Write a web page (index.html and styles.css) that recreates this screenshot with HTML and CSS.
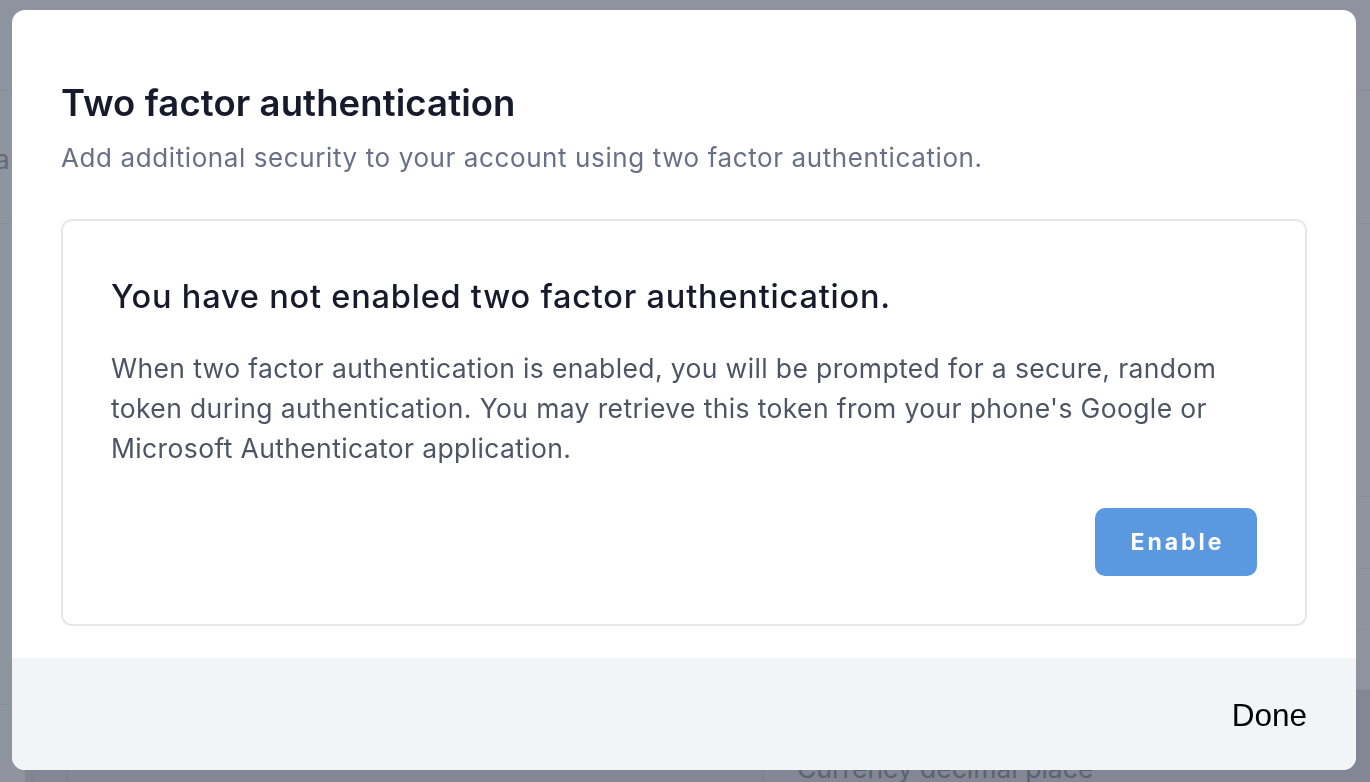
FILE: index.html
```html
<!DOCTYPE html>
<html lang="en">
<head>
<meta charset="utf-8">
<title>Two factor authentication</title>
<link rel="stylesheet" href="styles.css">
</head>
<body>
<div class="page">
  <div class="page-top"></div>
  <div class="page-head"><span class="head-text">a</span></div>
  <div class="page-body">
    <div class="body-rows">
      <div class="col-left">
        <div class="left-line"></div>
      </div>
      <div class="col-right">
        <div class="row-line row-a"></div>
        <div class="row-line row-b"></div>
        <div class="row-line row-c"></div>
        <div class="row-line row-d"></div>
      </div>
    </div>
    <div class="table">
      <div class="cell c1"></div>
      <div class="cell c2"></div>
      <div class="cell c3"></div>
      <div class="cell c4"><span>Currency decimal place</span></div>
    </div>
  </div>
</div>

<div class="overlay"></div>

<div class="modal" role="dialog" aria-labelledby="tfa-title">
  <div class="modal-body">
    <h2 class="modal-title" id="tfa-title">Two factor authentication</h2>
    <p class="modal-subtitle">Add additional security to your account using two factor authentication.</p>
    <div class="card">
      <h3 class="card-title">You have not enabled two factor authentication.</h3>
      <p class="card-text">When two factor authentication is enabled, you will be prompted for a secure, random token during authentication. You may retrieve this token from your phone's Google or Microsoft Authenticator application.</p>
      <div class="card-actions">
        <button class="btn-enable" type="button">Enable</button>
      </div>
    </div>
  </div>
  <div class="modal-footer">
    <button class="btn-done" type="button">Done</button>
  </div>
</div>
</body>
</html>
```

FILE: styles.css
```css
* { box-sizing: border-box; }

html, body {
  margin: 0;
  padding: 0;
}

body {
  width: 1370px;
  height: 782px;
  overflow: hidden;
  font-family: Inter, "Noto Sans", "Liberation Sans", sans-serif;
  background: #ffffff;
}

/* ---------- background page (dimmed) ---------- */
.page {
  height: 782px;
  overflow: hidden;
  background: #fbfbfc;
}

.page-top {
  height: 91px;
  border-bottom: 1px solid #dcdee3;
  background: #f7f8fa;
}

.page-head {
  height: 133px;
  border-bottom: 1px solid #dcdee3;
  display: flex;
  align-items: center;
}

.head-text {
  margin-left: -5px;
  margin-top: 4px;
  font-size: 26px;
  color: #4b5563;
}

.page-body {
  display: flex;
  flex-direction: column;
}

.body-rows {
  height: 466px;
  display: flex;
}

.col-left {
  width: 700px;
}

.left-line {
  height: 481px;
  border-bottom: 1px solid #dcdee3;
}

.col-right {
  flex: 1;
  display: flex;
  flex-direction: column;
}

.row-line {
  border-bottom: 1px solid #dcdee3;
}
.row-a { height: 273px; }
.row-b { height: 72px; }
.row-c { height: 61px; }
.row-d { height: 60px; }

.table {
  margin-left: 25px;
  height: 100px;
  display: flex;
  background: #c4c7cd;
}

.cell {
  border-right: 2px solid #b3b6bd;
}
.c1 { width: 8px; }
.c2 { width: 35px; }
.c3 { width: 696px; }
.c4 {
  flex: 1;
  border-right: none;
  padding: 62px 0 0 33px;
  font-size: 26.5px;
  color: #2f3440;
  white-space: nowrap;
}

/* ---------- overlay ---------- */
.overlay {
  position: fixed;
  inset: 0;
  background: rgba(107, 114, 128, 0.75);
}

/* ---------- modal ---------- */
.modal {
  position: fixed;
  left: 12px;
  top: 10px;
  width: 1344px;
  height: 760px;
  background: #ffffff;
  border-radius: 13px;
  overflow: hidden;
  display: flex;
  flex-direction: column;
}

.modal-body {
  flex: 1;
  padding: 70px 49px 0 49px;
}

.modal-title {
  margin: 0;
  font-size: 36.5px;
  line-height: 47px;
  font-weight: 600;
  letter-spacing: 0.1px;
  color: #161a2b;
}

.modal-subtitle {
  margin: 14px 0 0 0;
  font-size: 26px;
  line-height: 34px;
  letter-spacing: 0.6px;
  color: #677084;
}

.card {
  margin-top: 44px;
  height: 407px;
  border: 2px solid #e5e7eb;
  border-radius: 11px;
  padding: 55px 48px 0 48px;
}

.card-title {
  margin: 0;
  font-size: 32.5px;
  line-height: 42px;
  font-weight: 500;
  letter-spacing: 0.8px;
  color: #161a2b;
}

.card-text {
  margin: 30px 0 0 0;
  font-size: 26.5px;
  line-height: 40px;
  letter-spacing: 0.37px;
  color: #4b5563;
}

.card-actions {
  margin-top: 40px;
  display: flex;
  justify-content: flex-end;
}

.btn-enable {
  width: 162px;
  height: 68px;
  border: none;
  border-radius: 10px;
  background: #5a99e0;
  color: #ffffff;
  font-family: Inter, "Noto Sans", "Liberation Sans", sans-serif;
  font-size: 23px;
  font-weight: 700;
  letter-spacing: 3px;
  padding: 0 0 0 3px;
}

.modal-footer {
  height: 112px;
  background: #f3f4f6;
  display: flex;
  align-items: center;
  justify-content: flex-end;
  padding: 0 49px 0 0;
}

.btn-done {
  border: none;
  background: transparent;
  padding: 0;
  font-family: "Liberation Sans", Arial, sans-serif;
  font-size: 31.5px;
  color: #000000;
  margin-top: 2px;
}
```
